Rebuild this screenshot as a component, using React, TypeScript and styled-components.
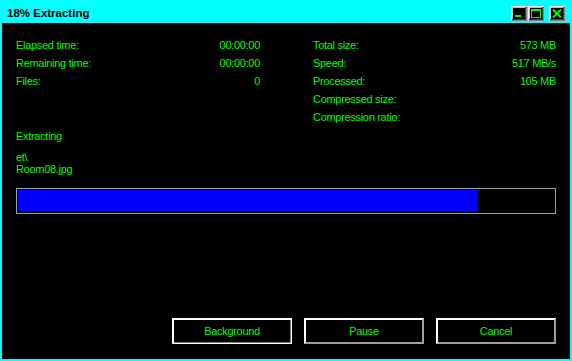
import styled, { createGlobalStyle } from 'styled-components'

const GlobalStyle = createGlobalStyle`
  html, body {
    margin: 0;
    padding: 0;
    background: #000;
  }
  body {
    font-family: 'Liberation Sans', Arial, sans-serif;
  }
`

const leftStats = [
  { label: 'Elapsed time:', value: '00:00:00' },
  { label: 'Remaining time:', value: '00:00:00' },
  { label: 'Files:', value: '0' },
]

const rightStats = [
  { label: 'Total size:', value: '573 MB' },
  { label: 'Speed:', value: '517 MB/s' },
  { label: 'Processed:', value: '105 MB' },
  { label: 'Compressed size:', value: '' },
  { label: 'Compression ratio:', value: '' },
]

export default function App() {
  const progress = 85.8

  return (
    <>
      <GlobalStyle />
      <Window>
        <TitleBar>
          <Title>18% Extracting</Title>
          <Controls>
            <CtrlButton aria-label='Minimize'>
              <svg width='10' height='9' viewBox='0 0 10 9'>
                <rect x='1' y='6' width='6' height='2' fill='#00ff00' />
              </svg>
            </CtrlButton>
            <CtrlButton aria-label='Maximize'>
              <svg width='10' height='9' viewBox='0 0 10 9'>
                <rect x='0.5' y='0.5' width='9' height='8' fill='none' stroke='#00ff00' />
                <rect x='0' y='0' width='10' height='2' fill='#00ff00' />
              </svg>
            </CtrlButton>
            <CtrlButton aria-label='Close' $gap>
              <svg width='10' height='9' viewBox='0 0 10 9'>
                <path d='M1 0.5 L9 8.5 M9 0.5 L1 8.5' stroke='#00ff00' strokeWidth='2' />
              </svg>
            </CtrlButton>
          </Controls>
        </TitleBar>
        <Body>
          <Stats>
            <Column>
              {leftStats.map((s) => (
                <Row key={s.label}>
                  <span>{s.label}</span>
                  <span>{s.value}</span>
                </Row>
              ))}
            </Column>
            <Column>
              {rightStats.map((s) => (
                <Row key={s.label}>
                  <span>{s.label}</span>
                  <span>{s.value}</span>
                </Row>
              ))}
            </Column>
          </Stats>
          <Status>Extracting</Status>
          <FilePath>
            <div>et\</div>
            <div>Room08.jpg</div>
          </FilePath>
          <Progress>
            <Fill style={{ width: `${progress}%` }} />
          </Progress>
          <Buttons>
            <Button $default>Background</Button>
            <Button>Pause</Button>
            <Button>Cancel</Button>
          </Buttons>
        </Body>
      </Window>
    </>
  )
}

const Window = styled.div`
  width: 572px;
  height: 361px;
  box-sizing: border-box;
  background: #00ffff;
  padding: 0 2px 2px 2px;
  display: flex;
  flex-direction: column;
`

const TitleBar = styled.div`
  height: 23px;
  display: flex;
  align-items: center;
  justify-content: space-between;
  padding: 0 5px 0 5px;
`

const Title = styled.div`
  font-size: 11.5px;
  font-weight: bold;
  color: #000;
  margin-top: 2px;
`

const Controls = styled.div`
  display: flex;
  align-items: center;
  margin-top: 4px;
`

const CtrlButton = styled.div<{ $gap?: boolean }>`
  width: 16px;
  height: 15px;
  box-sizing: border-box;
  background: #000;
  border: 1px solid;
  border-color: #ffffff #808080 #808080 #ffffff;
  box-shadow: inset -1px -1px 0 #404040, inset 1px 1px 0 #c0c0c0;
  display: flex;
  align-items: center;
  justify-content: center;
  margin-left: ${({ $gap }) => ($gap ? '5px' : '1px')};
`

const Body = styled.div`
  flex: 1;
  background: #000;
  color: #00ff00;
  font-size: 11px;
  letter-spacing: -0.3px;
  padding: 13px 14px 15px 14px;
  display: flex;
  flex-direction: column;
`

const Stats = styled.div`
  display: grid;
  grid-template-columns: 244px 243px;
  column-gap: 53px;
`

const Column = styled.div`
  display: flex;
  flex-direction: column;
`

const Row = styled.div`
  display: flex;
  justify-content: space-between;
  line-height: 18px;
  height: 18px;
`

const Status = styled.div`
  line-height: 18px;
  margin-top: 1px;
`

const FilePath = styled.div`
  line-height: 12px;
  margin-top: 6px;
`

const Progress = styled.div`
  margin-top: 13px;
  height: 26px;
  box-sizing: border-box;
  border: 1px solid #a0a0a0;
  padding: 1px;
`

const Fill = styled.div`
  height: 100%;
  background: #0000ff;
`

const Buttons = styled.div`
  margin-top: auto;
  display: flex;
  justify-content: flex-end;
  gap: 12px;
`

const Button = styled.div<{ $default?: boolean }>`
  width: 120px;
  height: 26px;
  box-sizing: border-box;
  background: #000;
  color: #00ff00;
  display: flex;
  align-items: center;
  justify-content: center;
  border: ${({ $default }) => ($default ? '1px solid #ffffff' : '2px solid')};
  border-color: ${({ $default }) =>
    $default ? '#ffffff' : '#ffffff #a0a0a0 #a0a0a0 #ffffff'};
  box-shadow: ${({ $default }) =>
    $default ? 'inset 1px 1px 0 #ffffff, inset -1px -1px 0 #808080' : 'none'};
`
